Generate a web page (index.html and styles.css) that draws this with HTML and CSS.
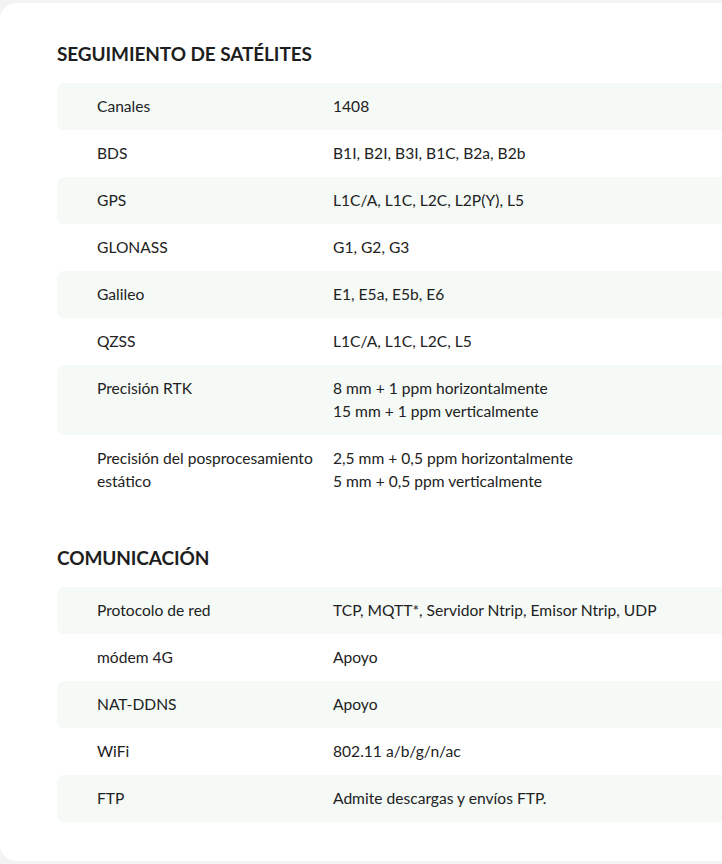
FILE: index.html
```html
<!DOCTYPE html>
<html lang="es">
<head>
<meta charset="utf-8">
<title>Especificaciones</title>
<link rel="stylesheet" href="styles.css">
</head>
<body>
<div class="card">
  <section class="section">
    <h2 class="title">SEGUIMIENTO DE SATÉLITES</h2>
    <div class="specs">
      <div class="row"><div class="label">Canales</div><div class="value">1408</div></div>
      <div class="row"><div class="label">BDS</div><div class="value">B1I, B2I, B3I, B1C, B2a, B2b</div></div>
      <div class="row"><div class="label">GPS</div><div class="value">L1C/A, L1C, L2C, L2P(Y), L5</div></div>
      <div class="row"><div class="label">GLONASS</div><div class="value">G1, G2, G3</div></div>
      <div class="row"><div class="label">Galileo</div><div class="value">E1, E5a, E5b, E6</div></div>
      <div class="row"><div class="label">QZSS</div><div class="value">L1C/A, L1C, L2C, L5</div></div>
      <div class="row"><div class="label">Precisión RTK</div><div class="value">8 mm + 1 ppm horizontalmente<br>15 mm + 1 ppm verticalmente</div></div>
      <div class="row"><div class="label">Precisión del posprocesamiento estático</div><div class="value">2,5 mm + 0,5 ppm horizontalmente<br>5 mm + 0,5 ppm verticalmente</div></div>
    </div>
  </section>
  <section class="section">
    <h2 class="title">COMUNICACIÓN</h2>
    <div class="specs">
      <div class="row"><div class="label">Protocolo de red</div><div class="value">TCP, MQTT*, Servidor Ntrip, Emisor Ntrip, UDP</div></div>
      <div class="row"><div class="label">módem 4G</div><div class="value">Apoyo</div></div>
      <div class="row"><div class="label">NAT-DDNS</div><div class="value">Apoyo</div></div>
      <div class="row"><div class="label">WiFi</div><div class="value">802.11 a/b/g/n/ac</div></div>
      <div class="row"><div class="label">FTP</div><div class="value">Admite descargas y envíos FTP.</div></div>
    </div>
  </section>
</div>
</body>
</html>
```
FILE: styles.css
```css
html, body {
  margin: 0;
  padding: 0;
}
body {
  background: #f3f3f3;
  overflow: hidden;
  font-family: Lato, "Liberation Sans", sans-serif;
  color: #222;
}
.card {
  margin-top: 3px;
  width: 780px;
  background: #fff;
  border-radius: 16px;
  padding: 38px 0 39px 57px;
  box-sizing: border-box;
  display: flex;
  flex-direction: column;
  gap: 40px;
}
.title {
  margin: 0 0 16px;
  font-size: 19px;
  line-height: 26px;
  font-weight: 700;
  color: #1e1e1e;
  letter-spacing: -0.1px;
}
.specs {
  display: flex;
  flex-direction: column;
}
.row {
  display: grid;
  grid-template-columns: 236px 1fr;
  padding: 12px 0 12px 40px;
  font-size: 15.6px;
  line-height: 23px;
  border-radius: 7px;
}
.row:nth-child(odd) {
  background: #f5faf7;
}
```
